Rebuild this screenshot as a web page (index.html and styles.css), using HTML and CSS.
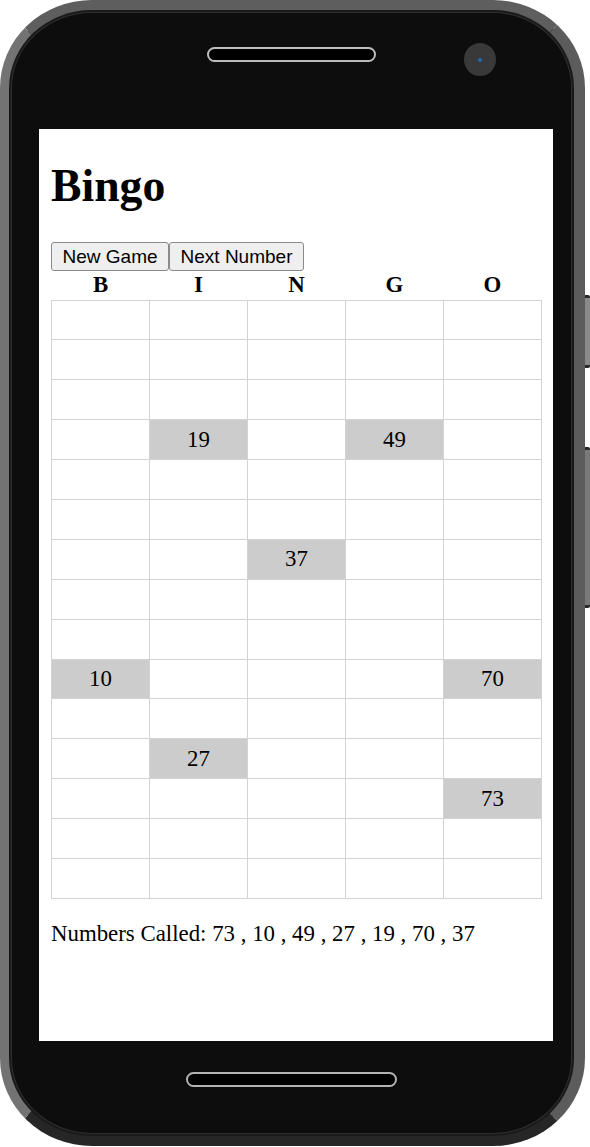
FILE: index.html
```html
<!DOCTYPE html>
<html lang="en">
<head>
    <meta charset="UTF-8">
    <meta name="viewport" content="width=device-width, initial-scale=1.0">
    <title>Bingo</title>
    <link rel="stylesheet" href="styles.css">
</head>
<body>
    <div class="device">
        <div class="phone">
            <div class="phone-top">
                <div class="speaker"></div>
                <div class="camera"><span class="lens"></span></div>
            </div>

            <div class="screen">
                <h1>Bingo</h1>

                <div class="controls">
                    <button onclick="newGame()">New Game</button><button onclick="nextNumber()">Next Number</button>
                </div>

                <table class="board">
                    <thead>
                        <tr>
                            <th>B</th>
                            <th>I</th>
                            <th>N</th>
                            <th>G</th>
                            <th>O</th>
                        </tr>
                    </thead>
                    <tbody id="boardBody"></tbody>
                </table>

                <p class="called">Numbers Called: <span id="calledList"></span></p>
            </div>

            <div class="phone-bottom">
                <div class="home-bar"></div>
            </div>
        </div>

        <div class="side-keys">
            <div class="key key-volume"></div>
            <div class="key key-power"></div>
        </div>
    </div>

    <script>
        let called = [73, 10, 49, 27, 19, 70, 37];

        function drawBoard() {
            let body = document.getElementById("boardBody");
            body.innerHTML = "";
            for (let row = 1; row <= 15; row++) {
                let tr = document.createElement("tr");
                for (let col = 0; col < 5; col++) {
                    let num = col * 15 + row;
                    let td = document.createElement("td");
                    if (called.includes(num)) {
                        td.textContent = num;
                        td.className = "hit";
                    }
                    tr.appendChild(td);
                }
                body.appendChild(tr);
            }
            document.getElementById("calledList").textContent = called.join(" , ");
        }

        function newGame() {
            called = [];
            drawBoard();
        }

        function nextNumber() {
            if (called.length >= 75) return;
            let num;
            do {
                num = Math.floor(Math.random() * 75) + 1;
            } while (called.includes(num));
            called.unshift(num);
            drawBoard();
        }

        drawBoard();
    </script>
</body>
</html>
```

FILE: styles.css
```css
body {
    margin: 0;
    background: #fff;
}

.device {
    display: flex;
    align-items: flex-start;
}

.phone {
    width: 585px;
    height: 1146px;
    box-sizing: border-box;
    display: flex;
    flex-direction: column;
    background: #0d0d0d;
    border: 10px solid;
    border-left-width: 9px;
    border-right-width: 11px;
    border-color: #5e5e5e #5c5c5c #262626 #737373;
    border-radius: 92px / 88px;
    box-shadow: inset 0 0 0 2px #1a1a1a, inset 0 0 0 3px #2e2e2e;
}

.phone-top {
    height: 119px;
    box-sizing: border-box;
    padding-top: 33px;
    display: grid;
    grid-template-columns: 1fr 169px 1fr;
    align-items: start;
}

.speaker {
    grid-column: 2;
    margin-top: 4px;
    height: 15px;
    box-sizing: border-box;
    background: #000;
    border: 2px solid #bdbdbd;
    border-radius: 8px;
}

.camera {
    grid-column: 3;
    margin-left: 88px;
    width: 32px;
    height: 33px;
    border-radius: 50%;
    background: #393939;
    display: flex;
    align-items: center;
    justify-content: center;
}

.lens {
    width: 4px;
    height: 4px;
    border-radius: 50%;
    background: #1b6db3;
}

.screen {
    height: 912px;
    margin: 0 21px 0 30px;
    padding: 0 11px 0 12px;
    box-sizing: border-box;
    background: #fff;
    overflow: hidden;
    font-family: 'Liberation Serif', 'Times New Roman', serif;
    font-size: 22.85px;
    color: #000;
}

h1 {
    font-size: 45.7px;
    font-weight: bold;
    margin: 30.2px 0 29.8px;
}

.controls {
    display: flex;
}

.controls button {
    font-family: 'Liberation Sans', Arial, sans-serif;
    font-size: 19px;
    color: #000;
    background: #efefef;
    border: 1px solid #8a8a8a;
    border-radius: 3px;
    padding: 2.6px 10.5px;
    cursor: pointer;
}

.controls button:hover {
    background: #e5e5e5;
}

.board {
    width: 100%;
    table-layout: fixed;
    border-collapse: collapse;
}

.board th {
    font-size: 22.85px;
    font-weight: bold;
    padding: 1.2px;
    text-align: center;
}

.board td {
    height: 39.9px;
    padding: 0;
    box-sizing: border-box;
    border: 1px solid #d3d3d3;
    text-align: center;
    font-size: 22.85px;
}

.board td.hit {
    background: #cccccc;
}

.called {
    margin: 22px 0;
}

.phone-bottom {
    flex: 1;
    display: flex;
    justify-content: center;
    padding-top: 31px;
}

.home-bar {
    width: 211px;
    height: 15px;
    box-sizing: border-box;
    background: #000;
    border: 2px solid #b3b3b3;
    border-radius: 8px;
}

.side-keys {
    display: flex;
    flex-direction: column;
    gap: 79px;
    padding-top: 295px;
}

.key {
    width: 5px;
    background: #8a8a8a;
    border-radius: 0 2px 2px 0;
    border-top: 3px solid #2a2a2a;
    border-bottom: 3px solid #2a2a2a;
    box-sizing: border-box;
}

.key-volume {
    height: 73px;
}

.key-power {
    height: 161px;
    background: #7a7a7a;
}
```
